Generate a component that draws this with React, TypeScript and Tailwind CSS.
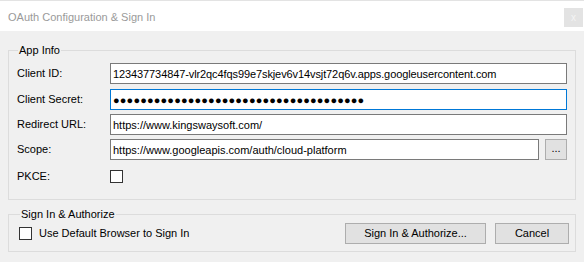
import type { ReactNode } from "react";

// Label + field row inside the App Info group
function Row({ label, children }: { label: string; children: ReactNode }) {
  return (
    <div className="flex items-center">
      <span className="w-[93px] shrink-0">{label}</span>
      <div className="flex-1 flex items-center">{children}</div>
    </div>
  );
}

function TextBox({
  value,
  focused = false,
  className = "",
}: {
  value: string;
  focused?: boolean;
  className?: string;
}) {
  const border = focused ? "border-[#0078d7]" : "border-[#7a7a7a]";
  return (
    <input
      readOnly
      value={value}
      className={`h-[21px] w-full min-w-0 bg-white border ${border} px-[2px] text-[11px] text-black outline-none ${className}`}
      style={{ fontFamily: "inherit" }}
    />
  );
}

function CheckBox() {
  return <div className="w-[13px] h-[13px] bg-white border border-[#333333] shrink-0" />;
}

function WinButton({ children, className = "" }: { children: ReactNode; className?: string }) {
  return (
    <button
      className={`h-[21px] bg-[#e1e1e1] border border-[#adadad] flex items-center justify-center text-[11px] text-black ${className}`}
    >
      {children}
    </button>
  );
}

export default function App() {
  const dots = "●".repeat(37);

  return (
    <div
      className="w-[584px] h-[262px] bg-[#f0f0f0] text-[11px] text-black overflow-hidden"
      style={{ fontFamily: '"Liberation Sans", Arial, sans-serif' }}
    >
      {/* Title bar */}
      <div className="h-[31px] bg-white border-t border-[#e3e3e3] flex justify-between items-start pr-[1px]">
        <span className="pl-[8px] pt-[8px] text-[11px] text-[#9a9a9a]">
          OAuth Configuration &amp; Sign In
        </span>
        <div className="mt-[7px] w-[19px] h-[19px] bg-[#e3e3e3] flex items-center justify-center text-[10px] leading-none text-[#f4f4f4]">
          x
        </div>
      </div>

      <div className="px-[8px]">
        {/* App Info */}
        <fieldset className="mt-[13px] border border-[#dcdcdc] pl-[8px] pr-[8px] pt-[6px] pb-[14px]">
          <legend className="ml-[1px] px-[1px] leading-[13px]">App Info</legend>
          <div className="flex flex-col gap-[4px]">
            <Row label="Client ID:">
              <TextBox
                value="123437734847-vlr2qc4fqs99e7skjev6v14vsjt72q6v.apps.googleusercontent.com"
                className="tracking-[-0.1px]"
              />
            </Row>
            <div className="mt-[1px]">
              <Row label="Client Secret:">
                <TextBox value={dots} focused className="tracking-[0.15px]" />
              </Row>
            </div>
            <Row label="Redirect URL:">
              <TextBox value="https://www.kingswaysoft.com/" />
            </Row>
            <Row label="Scope:">
              <TextBox value="https://www.googleapis.com/auth/cloud-platform" />
              <WinButton className="ml-[6px] w-[22px] shrink-0 pb-[3px]">...</WinButton>
            </Row>
            <div className="flex items-center mt-[4px]">
              <span className="w-[93px] shrink-0">PKCE:</span>
              <CheckBox />
            </div>
          </div>
        </fieldset>

        {/* Sign In & Authorize */}
        <fieldset className="mt-[8px] border border-[#dcdcdc] pl-[10px] pr-[6px] pt-[2px] pb-[7px]">
          <legend className="ml-[1px] px-[1px] leading-[13px]">Sign In &amp; Authorize</legend>
          <div className="flex items-center">
            <CheckBox />
            <span className="ml-[7px]">Use Default Browser to Sign In</span>
            <div className="ml-auto flex gap-[9px]">
              <WinButton className="w-[141px]">Sign In &amp; Authorize...</WinButton>
              <WinButton className="w-[74px]">Cancel</WinButton>
            </div>
          </div>
        </fieldset>
      </div>
    </div>
  );
}
